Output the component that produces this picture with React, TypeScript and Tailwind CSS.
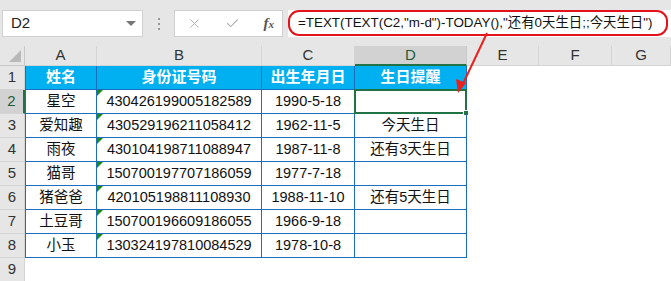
import React from "react";
import { X, Check } from "lucide-react";

const cols = ["A", "B", "C", "D", "E", "F", "G"];
const data = [
  ["星空", "430426199005182589", "1990-5-18", ""],
  ["爱知趣", "430529196211058412", "1962-11-5", "今天生日"],
  ["雨夜", "430104198711088947", "1987-11-8", "还有3天生日"],
  ["猫哥", "150700197707186059", "1977-7-18", ""],
  ["猪爸爸", "420105198811108930", "1988-11-10", "还有5天生日"],
  ["土豆哥", "150700196609186055", "1966-9-18", ""],
  ["小玉", "130324197810084529", "1978-10-8", ""],
];
const heads = ["姓名", "身份证号码", "出生年月日", "生日提醒"];

const cellFont = { fontFamily: '"Liberation Sans", "Noto Sans CJK SC", sans-serif' };

export default function App() {
  return (
    <div className="relative w-[671px] h-[281px] overflow-hidden bg-white" style={cellFont}>
      {/* toolbar */}
      <div className="flex items-start h-[46px] bg-[#e6e6e6] pt-[10px]">
        <div className="ml-[2px] w-[141px] h-[27px] bg-white border border-[#d0d0d0] flex items-center justify-between pl-[8px] pr-[6px]">
          <span className="text-[15px] text-[#222]">D2</span>
          <span className="w-0 h-0 border-l-[5px] border-r-[5px] border-t-[5px] border-l-transparent border-r-transparent border-t-[#777]" />
        </div>
        <div className="w-[31px] h-[27px] flex flex-col items-center justify-center gap-[3px]">
          <span className="w-[2px] h-[2px] bg-[#999]" />
          <span className="w-[2px] h-[2px] bg-[#999]" />
          <span className="w-[2px] h-[2px] bg-[#999]" />
        </div>
        <div className="w-[109px] h-[27px] bg-white border border-[#d0d0d0] flex items-center pl-[12px] pr-[8px] justify-between">
          <X size={15} strokeWidth={1.6} color="#b4b4b4" />
          <Check size={15} strokeWidth={1.8} color="#b4b4b4" />
          <span className="text-[15px] italic font-bold text-[#555]" style={{ fontFamily: '"Liberation Serif", serif' }}>
            f<span className="text-[11px]">x</span>
          </span>
        </div>
        <div className="ml-[5px] flex-1 h-[27px] bg-white">
          <div className="w-[380px] h-[26px] border-2 border-[#e3131b] rounded-[11px] flex items-center pl-[8px] text-[13.4px] text-[#111] whitespace-nowrap" style={{ fontFamily: '"Liberation Sans", "Noto Sans CJK SC", sans-serif' }}>
            =TEXT(TEXT(C2,"m-d")-TODAY(),"还有0天生日;;今天生日")
          </div>
        </div>
      </div>

      {/* grid */}
      <div className="grid grid-cols-[25px_72px_165px_93px_112px_72px_73px_1fr] grid-rows-[20px_repeat(9,24px)]">
        {/* column headers */}
        <div className="bg-[#e6e6e6] border-r border-b border-[#c8c8c8] relative">
          <svg width="12" height="12" className="absolute right-[3px] bottom-[3px]">
            <polygon points="12,0 12,12 0,12" fill="#b9b9b9" />
          </svg>
        </div>
        {cols.map((c) =>
          c === "D" ? (
            <div key={c} className="bg-[#d2d2d2] border-r border-[#c8c8c8] border-b-2 border-b-[#217346] flex items-center justify-center text-[15px] text-[#1e5c3a]">
              {c}
            </div>
          ) : (
            <div key={c} className="bg-[#e6e6e6] border-r border-b border-[#d4d4d4] flex items-center justify-center text-[15px] text-[#333]">
              {c}
            </div>
          )
        )}

        {/* row 1 */}
        <div className="bg-[#e6e6e6] border-r border-b border-[#d4d4d4] flex items-center justify-center text-[15px] text-[#333]">1</div>
        {heads.map((h, i) => (
          <div key={h} className={`bg-[#00b0f0] border-r border-b border-[#1c6fbf] flex items-center justify-center text-[15px] font-bold text-white ${i === 0 ? "border-l" : ""}`}>
            {h}
          </div>
        ))}
        <div />
        <div />
        <div />

        {data.map((r, ri) => {
          const sel = ri === 0;
          return (
            <React.Fragment key={ri}>
              {sel ? (
                <div className="bg-[#d2d2d2] border-r-2 border-r-[#217346] border-b border-b-[#d4d4d4] flex items-center justify-center text-[15px] text-[#1e5c3a]">
                  {ri + 2}
                </div>
              ) : (
                <div className="bg-[#e6e6e6] border-r border-b border-[#d4d4d4] flex items-center justify-center text-[15px] text-[#333]">
                  {ri + 2}
                </div>
              )}
              {r.map((v, ci) => (
                <div
                  key={ci}
                  className={`relative border-r border-b border-[#1c6fbf] flex items-center justify-center text-[14.5px] text-[#111] ${ci === 0 ? "border-l" : ""}`}
                >
                  {ci === 1 && (
                    <span className="absolute left-0 top-0 w-0 h-0 border-t-[6px] border-r-[6px] border-t-[#1a8a1a] border-r-transparent" />
                  )}
                  {v}
                  {sel && ci === 3 && (
                    <span className="absolute -left-px -top-px -right-px -bottom-px border-2 border-[#217346]">
                      <span className="absolute -right-[4px] -bottom-[4px] w-[6px] h-[6px] bg-[#217346] border border-white" />
                    </span>
                  )}
                </div>
              ))}
              <div />
              <div />
              <div />
            </React.Fragment>
          );
        })}

        {/* row 9 */}
        <div className="bg-[#e6e6e6] border-r border-b border-[#d4d4d4] flex items-center justify-center text-[15px] text-[#333]">9</div>
      </div>

      {/* red arrow */}
      <svg className="absolute left-0 top-0 pointer-events-none" width="671" height="281">
        <line x1="487" y1="33" x2="461" y2="88" stroke="#e8201e" strokeWidth="2" />
        <polygon points="458,93 456,79 466,83" fill="#e8201e" />
      </svg>
    </div>
  );
}
